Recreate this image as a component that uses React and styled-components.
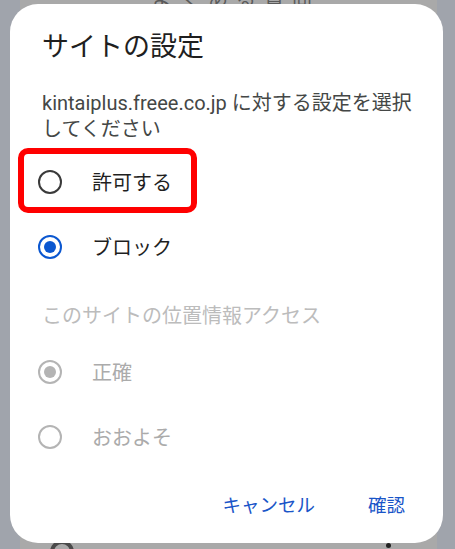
import React from "react";
import styled, { createGlobalStyle } from "styled-components";

const GlobalStyle = createGlobalStyle`
  html, body {
    margin: 0;
    padding: 0;
    background: #a0a4ac;
  }
  body {
    font-family: "Roboto", "Noto Sans CJK JP", sans-serif;
  }
`;

const Screen = styled.div`
  position: relative;
  width: 455px;
  height: 549px;
  overflow: hidden;
  background: linear-gradient(
    to right,
    #a0a4ac 0,
    #a0a4ac 20px,
    #a9a9a9 20px,
    #a9a9a9 437px,
    #a0a4ac 437px
  );
  display: flex;
  flex-direction: column;
  padding: 4px 0 0 10px;
  box-sizing: border-box;
`;

const BehindText = styled.span`
  position: absolute;
  top: -17px;
  left: 152px;
  font-family: "Noto Sans CJK JP", sans-serif;
  font-size: 20px;
  letter-spacing: 8px;
  color: #5a5a5a;
`;

const BehindIcon = styled.span`
  position: absolute;
  top: 540px;
  left: 50px;
  width: 24px;
  height: 24px;
  border-radius: 50%;
  border: 4px solid #4a4a4a;
  box-sizing: border-box;
`;

const BehindDot = styled.span`
  position: absolute;
  top: 543px;
  left: 386px;
  width: 5px;
  height: 5px;
  border-radius: 50%;
  background: #222;
`;

const Dialog = styled.div`
  position: relative;
  width: 433px;
  height: 539px;
  background: #ffffff;
  border-radius: 28px;
  display: flex;
  flex-direction: column;
  box-sizing: border-box;
  padding-top: 23px;
`;

const Title = styled.h2`
  margin: 0;
  padding: 0 32px;
  font-family: "Noto Sans CJK JP", sans-serif;
  font-weight: 400;
  font-size: 27px;
  line-height: 36px;
  color: #1f1f1f;
`;

const Message = styled.p`
  margin: 27px 0 0;
  padding: 0 28px 0 32px;
  font-size: 20px;
  line-height: 26px;
  color: #444746;
`;

const Options = styled.div`
  margin-top: 7px;
  display: flex;
  flex-direction: column;
`;

const OptionRow = styled.label`
  position: relative;
  height: 65px;
  display: flex;
  align-items: center;
  gap: 30px;
  padding-left: 28px;
  font-family: "Noto Sans CJK JP", sans-serif;
  font-size: 20px;
  color: ${(p) => (p.$disabled ? "#ababab" : "#1f1f1f")};
`;

const Radio = styled.span`
  width: 24px;
  height: 24px;
  box-sizing: border-box;
  border-radius: 50%;
  border: 2.4px solid ${(p) => p.$color};
  display: flex;
  align-items: center;
  justify-content: center;
  flex-shrink: 0;

  &::after {
    content: "";
    width: 12px;
    height: 12px;
    border-radius: 50%;
    background: ${(p) => (p.$checked ? p.$color : "transparent")};
  }
`;

const Highlight = styled.span`
  position: absolute;
  left: 8px;
  top: -1px;
  width: 179px;
  height: 65px;
  box-sizing: border-box;
  border: 6.5px solid #ff0000;
  border-radius: 10px;
  pointer-events: none;
`;

const SectionLabel = styled.div`
  height: 60px;
  box-sizing: border-box;
  padding: 11px 32px 0;
  display: flex;
  align-items: center;
  font-family: "Noto Sans CJK JP", sans-serif;
  font-size: 20px;
  color: #bcbcbc;
`;

const Actions = styled.div`
  margin-top: 11px;
  height: 48px;
  display: flex;
  justify-content: flex-end;
  align-items: center;
  gap: 29px;
  padding-right: 26px;
`;

const TextButton = styled.button`
  background: none;
  border: none;
  padding: 0 12px;
  height: 40px;
  font-family: "Noto Sans CJK JP", sans-serif;
  font-size: 18.5px;
  color: #1a55c8;
  cursor: pointer;
`;

const Option = ({ label, checked, disabled, highlight }) => {
  const color = disabled ? "#b4b4b4" : checked ? "#0b57d0" : "#3a3a3a";
  return (
    <OptionRow $disabled={disabled}>
      {highlight && <Highlight />}
      <Radio $color={color} $checked={checked} />
      {label}
    </OptionRow>
  );
};

const App = () => {
  const permission = [
    { label: "許可する", checked: false, highlight: true },
    { label: "ブロック", checked: true },
  ];
  const accuracy = [
    { label: "正確", checked: true },
    { label: "おおよそ", checked: false },
  ];

  return (
    <>
      <GlobalStyle />
      <Screen>
        <BehindText>よくある質問</BehindText>
        <BehindIcon />
        <BehindDot />
        <Dialog>
          <Title>サイトの設定</Title>
          <Message>
            kintaiplus.freee.co.jp に対する設定を選択してください
          </Message>
          <Options>
            {permission.map((o) => (
              <Option key={o.label} {...o} />
            ))}
            <SectionLabel>このサイトの位置情報アクセス</SectionLabel>
            {accuracy.map((o) => (
              <Option key={o.label} {...o} disabled />
            ))}
          </Options>
          <Actions>
            <TextButton>キャンセル</TextButton>
            <TextButton>確認</TextButton>
          </Actions>
        </Dialog>
      </Screen>
    </>
  );
};

export default App;
